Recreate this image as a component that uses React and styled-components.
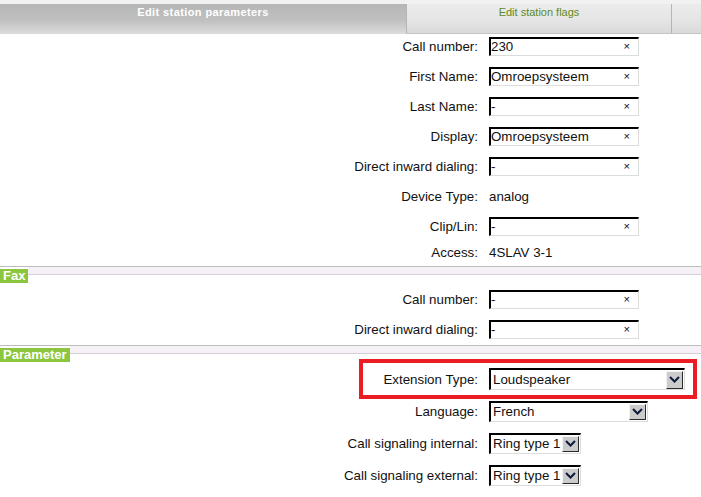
import React from 'react';
import styled, { createGlobalStyle } from 'styled-components';

const GlobalStyle = createGlobalStyle`
  body {
    margin: 0;
    background: #fff;
    font-family: "Liberation Sans", Arial, sans-serif;
    color: #111;
  }
`;

const Page = styled.div`
  width: 701px;
`;

const TabBar = styled.div`
  display: flex;
  height: 34px;
  box-sizing: border-box;
  padding-top: 4px;
  background: #f1f1f1;
`;

const Tab = styled.div`
  box-sizing: border-box;
  flex: ${props => (props.$w ? `0 0 ${props.$w}px` : '1')};
  height: 30px;
  padding-top: 2px;
  text-align: center;
  font-size: 11px;
  line-height: 13px;
  font-weight: ${props => (props.$active ? 700 : 400)};
  letter-spacing: ${props => (props.$active ? '0.4px' : '0')};
  color: ${props => (props.$active ? '#fff' : '#5e8a22')};
  background: ${props =>
    props.$active
      ? 'linear-gradient(#b6b6b6, #c0c0c0 55%, #dcdcdc)'
      : 'linear-gradient(#ececec, #e4e4e4 60%, #dadada)'};
  border-left: ${props => (props.$active ? 'none' : '1px solid #b5b5b5')};
  border-bottom: ${props => (props.$active ? 'none' : '1px solid #c4c4c4')};
`;

const Section = styled.div`
  display: flex;
  flex-direction: column;
  gap: ${props => props.$gap || 6}px;
  padding: ${props => props.$pad || '0'};
`;

const Row = styled.div`
  position: relative;
  display: grid;
  grid-template-columns: 478px auto;
  column-gap: 11px;
  align-items: center;
  height: ${props => props.$h || 24}px;
  font-size: 13.33px;
`;

const HighlightRow = styled(Row)`
  &::after {
    content: '';
    position: absolute;
    left: 359px;
    right: 4px;
    top: -7px;
    bottom: -7px;
    border: 4px solid #ec1c24;
  }
`;

const Label = styled.div`
  text-align: right;
  white-space: nowrap;
`;

const Value = styled.div`
  white-space: nowrap;
`;

const TextField = styled.div`
  box-sizing: border-box;
  width: 150px;
  height: 19px;
  display: flex;
  align-items: center;
  justify-content: space-between;
  padding: 0 8px 0 0;
  border-style: solid;
  border-width: 2px 1px 1px 2px;
  border-color: #000 #dcdcdc #dcdcdc #000;
  background: #fff;
  font-size: 13.33px;
  line-height: 15px;
`;

const ClearMark = styled.span`
  font-size: 11px;
  line-height: 11px;
  color: #0a0a22;
`;

const Select = styled.div`
  box-sizing: border-box;
  width: ${props => props.$w}px;
  height: ${props => props.$h || 20}px;
  display: flex;
  align-items: center;
  justify-content: space-between;
  padding: 0 1px 0 2px;
  border-style: solid;
  border-width: 2px 1px 1px 2px;
  border-color: #000 #dcdcdc #dcdcdc #000;
  background: #fff;
  font-size: 13.33px;
  line-height: 15px;
`;

const ArrowButton = styled.span`
  box-sizing: border-box;
  width: 17px;
  height: ${props => props.$h || 16}px;
  display: flex;
  align-items: center;
  justify-content: center;
  background: #cbcbcb;
  border-style: solid;
  border-width: 1px;
  border-color: #f4f4f4 #2a2a2a #2a2a2a #f4f4f4;
`;

const SectionHeader = styled.div`
  display: flex;
  align-items: flex-start;
  height: 17px;
  border-top: 1px solid #bcbcbc;
`;

const SectionTag = styled.span`
  margin-top: 2px;
  padding: 0 3px;
  background: #8cc63f;
  color: #fff;
  font-size: 13px;
  font-weight: 700;
  line-height: 14px;
`;

const SectionBand = styled.span`
  flex: 1;
  height: 7px;
  background: #f6f1f6;
  border-bottom: 1px solid #d6d0d6;
`;

const Chevron = () => (
  <svg width="11" height="7" viewBox="0 0 11 7">
    <polyline points="1,1 5.5,5.5 10,1" fill="none" stroke="#0b1a3a" strokeWidth="2" />
  </svg>
);

const Field = ({ value }) => (
  <TextField>
    <span>{value}</span>
    <ClearMark>×</ClearMark>
  </TextField>
);

const Dropdown = ({ value, w, h, bh }) => (
  <Select $w={w} $h={h}>
    <span>{value}</span>
    <ArrowButton $h={bh}>
      <Chevron />
    </ArrowButton>
  </Select>
);

const App = () => {
  const station = [
    { label: 'Call number:', field: '230' },
    { label: 'First Name:', field: 'Omroepsysteem' },
    { label: 'Last Name:', field: '-' },
    { label: 'Display:', field: 'Omroepsysteem' },
    { label: 'Direct inward dialing:', field: '-' },
    { label: 'Device Type:', text: 'analog' },
    { label: 'Clip/Lin:', field: '-' },
  ];

  return (
    <Page>
      <GlobalStyle />
      <TabBar>
        <Tab $active $w={406}>Edit station parameters</Tab>
        <Tab $w={265}>Edit station flags</Tab>
        <Tab />
      </TabBar>

      <Section $pad="0 0 6px 0">
        {station.map((item, i) => (
          <Row key={i}>
            <Label>{item.label}</Label>
            {item.field !== undefined ? <Field value={item.field} /> : <Value>{item.text}</Value>}
          </Row>
        ))}
        <Row $h={16}>
          <Label>Access:</Label>
          <Value>4SLAV 3-1</Value>
        </Row>
      </Section>

      <SectionHeader>
        <SectionTag>Fax</SectionTag>
        <SectionBand />
      </SectionHeader>
      <Section $pad="3px 0 4px 0">
        <Row>
          <Label>Call number:</Label>
          <Field value="-" />
        </Row>
        <Row>
          <Label>Direct inward dialing:</Label>
          <Field value="-" />
        </Row>
      </Section>

      <SectionHeader>
        <SectionTag>Parameter</SectionTag>
        <SectionBand />
      </SectionHeader>
      <Section $pad="3px 0 0 0">
        <HighlightRow $h={26}>
          <Label>Extension Type:</Label>
          <Dropdown value="Loudspeaker" w={196} h={22} bh={18} />
        </HighlightRow>
        <Row $h={26}>
          <Label>Language:</Label>
          <Dropdown value="French" w={159} h={21} />
        </Row>
        <Row $h={26}>
          <Label>Call signaling internal:</Label>
          <Dropdown value="Ring type 1" w={92} h={21} />
        </Row>
        <Row $h={26}>
          <Label>Call signaling external:</Label>
          <Dropdown value="Ring type 1" w={92} h={21} />
        </Row>
      </Section>
    </Page>
  );
};

export default App;
